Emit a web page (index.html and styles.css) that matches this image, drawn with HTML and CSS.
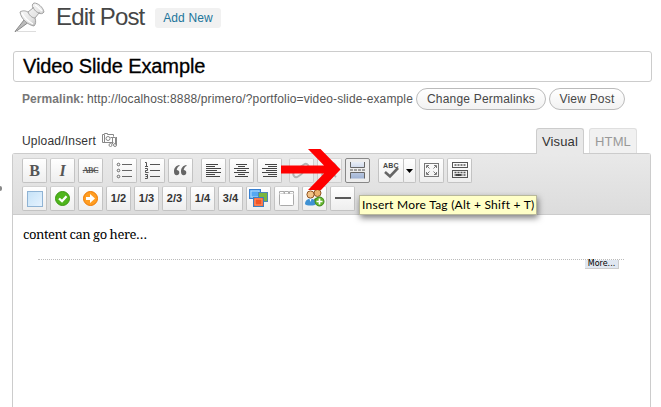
FILE: index.html
```html
<!DOCTYPE html>
<html lang="en">
<head>
<meta charset="utf-8">
<title>Edit Post</title>
<link rel="stylesheet" href="styles.css">
</head>
<body>
<header class="head">
  <svg class="pin" width="32" height="32" viewBox="0 0 32 32">
    <defs><linearGradient id="pg" x1="0" y1="0" x2="1" y2="1"><stop offset="0" stop-color="#fff"/><stop offset=".6" stop-color="#e4e4e4"/><stop offset="1" stop-color="#999"/></linearGradient></defs>
    <path d="M1 30.500L10 19l3.500 3L2 30.500z" fill="#bbb" stroke="#777" stroke-width=".8"/>
    <path d="M2 30.500h20" stroke="#ddd" stroke-width="1"/>
    <path d="M6 11c3-2 6-1 8 0l5-4c-1-2-1-4 1-5 4 0 9 4 10 9-1 2-4 2-5 1l-4 5c1 3 1 6-1 8-6-1-13-7-14-14z" fill="url(#pg)" stroke="#999" stroke-width=".9"/>
    <path d="M19 6c1 3 4 6 7 6M14 11c1 3 4 6 7 6" fill="none" stroke="#999" stroke-width=".9"/>
    <path d="M8 12c2 4 6 8 11 11M21 4c2 1 5 4 7 6" fill="none" stroke="#fff" stroke-width="1.300"/>
  </svg>
  <h1>Edit Post</h1>
  <a class="add">Add New</a>
</header>
<div class="title">Video Slide Example</div>
<div class="perma"><b>Permalink:</b><span class="url">http://localhost:8888/primero/?portfolio=video-slide-example</span><a class="pill change">Change Permalinks</a><a class="pill view">View Post</a></div>
<div class="media">
  <span class="upload">Upload/Insert</span>
  <svg class="cam" width="16" height="16" viewBox="0 0 16 16" fill="none" stroke="#888">
    <path d="M11.500 10.500H.5v-8h2v-1h3v1h6v2M2.500 3v7M8.500 5.500h5v7M10.500 5v7M14.500 5v8"/><circle cx="6" cy="6.500" r="2"/><circle cx="8.500" cy="13" r="1.500"/><circle cx="13" cy="13" r="1.500"/>
  </svg>
  <div class="tab on">Visual</div><div class="tab">HTML</div>
</div>
<main class="editor">
  <div class="tools">
    <div class="row">
      <span class="b bold">B</span><span class="b ital">I</span><span class="b strike">ABC</span>
      <span class="b g9"><svg width="23" height="23" fill="none" stroke="#666"><path d="M9 5.500h10M9 11.500h10M9 17.500h10"/><circle cx="5.500" cy="5.500" r="1.300"/><circle cx="5.500" cy="11.500" r="1.300"/><circle cx="5.500" cy="17.500" r="1.300"/></svg></span>
      <span class="b"><svg width="23" height="23" fill="none" stroke="#555"><path d="M9 5.500h10M9 11.500h10M9 17.500h10"/><path d="M4 3.500h1.500v4M4 7.500h3M4 9.500h2.500v2H4.500v2h3M4 15.500h2.500v4H4M4.500 17.500h2"/></svg></span>
      <span class="b"><svg width="23" height="23" fill="#666"><path d="M10.500 6C7 6.500 5 9 5 12.500c0 2.500 1 3.700 2.700 3.700 1.600 0 2.600-1 2.600-2.500 0-1.700-1-2.600-2.600-2.600C8 9 9 7.500 10.500 7zM17.500 6c-3.500.5-5.500 3-5.500 6.500 0 2.500 1 3.700 2.700 3.700 1.600 0 2.600-1 2.600-2.500 0-1.700-1-2.600-2.600-2.600.3-2.100 1.300-3.600 2.800-4.100z"/></svg></span>
      <span class="b g8"><svg width="23" height="23" stroke="#444"><path d="M4 5.500h12M4 7.500h9M4 9.500h15M4 11.500h11M4 13.500h15M4 15.500h9M4 17.500h14"/></svg></span>
      <span class="b"><svg width="23" height="23" stroke="#444"><path d="M6 5.500h11M8 7.500h7M4 9.500h15M7 11.500h9M4 13.500h15M8 15.500h7M5 17.500h13"/></svg></span>
      <span class="b"><svg width="23" height="23" stroke="#444"><path d="M7 5.500h12M10 7.500h9M4 9.500h15M8 11.500h11M4 13.500h15M10 15.500h9M5 17.500h14"/></svg></span>
      <span class="b g7 dim"><svg width="23" height="23" fill="none" stroke="#999" stroke-width="1.800"><rect x="3" y="11" width="10" height="6" rx="3" transform="rotate(-35 8 14)"/><rect x="9" y="6" width="10" height="6" rx="3" transform="rotate(-35 14 9)"/></svg></span>
      <span class="b dim"><svg width="23" height="23" fill="none" stroke="#999" stroke-width="1.800"><rect x="10" y="5" width="8" height="6" rx="3" transform="rotate(-35 14 8)"/><path d="M5 13l-1 3 3 2 3-1M14 14l4 4"/></svg></span>
      <span class="b active"><svg width="23" height="23"><defs><linearGradient id="mg" x2="0" y2="1"><stop stop-color="#e8edf6"/><stop offset="1" stop-color="#9fb2d4"/></linearGradient></defs><path d="M4.500 3v5.500h14V3M4.500 19.500v-6h14v6" fill="url(#mg)" stroke="#666"/><path d="M4 11h3m1 0h3m1 0h3m1 0h3" stroke="#555"/></svg></span>
      <span class="b g8 spell"><svg width="24" height="23"><text x="4" y="8.500">ABC</text><path d="M6 13l5 4.500L19 9" fill="none" stroke="#666" stroke-width="2.600"/></svg></span><span class="b drop"><svg width="11" height="23"><path d="M2 10h7l-3.500 4z" fill="#000"/></svg></span>
      <span class="b"><svg width="23" height="23" fill="none" stroke="#777"><rect x="4.500" y="4.500" width="14" height="13"/><path d="M6.500 9V6.500H9M14 6.500h2.500V9M16.500 13v2.500H14M9 15.500H6.500V13M7 7l2.500 2.500M16 7l-2.500 2.500M16 15l-2.500-2.500M7 15l2.500-2.500"/></svg></span>
      <span class="b"><svg width="23" height="23" fill="none" stroke="#555"><rect x="4.500" y="3.500" width="15" height="5"/><rect x="4.500" y="11.500" width="15" height="7"/><path d="M6.500 6h11M6.500 13.500h11M6.500 16h11" stroke-width="1.500" stroke-dasharray="2 1"/><path d="M8 16h5" stroke="#222" stroke-width="1.500"/></svg></span>
    </div>
    <div class="row">
      <span class="b"><svg width="23" height="23"><defs><linearGradient id="bg" x2="1" y2="1"><stop stop-color="#c5e2f7"/><stop offset="1" stop-color="#e6f3ff"/></linearGradient></defs><rect x="4.500" y="4.500" width="15" height="15" fill="url(#bg)" stroke="#8fb3d4"/></svg></span>
      <span class="b"><svg width="23" height="23"><circle cx="11.500" cy="11.500" r="7" fill="#4fb51c" stroke="#3b9710"/><path d="M8 11.500l3 2.700 4.500-5" fill="none" stroke="#fff" stroke-width="2.300"/></svg></span>
      <span class="b"><svg width="23" height="23"><circle cx="11.500" cy="11.500" r="7" fill="#ff9d22" stroke="#ee7900"/><path d="M7 10h4V7l5 4.500-5 4.500v-3H7z" fill="#fff"/></svg></span>
      <span class="b f">1/2</span><span class="b f">1/3</span><span class="b f">2/3</span><span class="b f">1/4</span><span class="b f">3/4</span>
      <span class="b"><svg width="23" height="23"><rect x="2.500" y="2.500" width="11" height="9" fill="#55a8f2" stroke="#377fd0"/><rect x="4" y="4" width="8" height="6" fill="none" stroke="#b5dbfa"/><rect x="11.500" y="5.500" width="9" height="9" fill="#79b63f" stroke="#4c87b8"/><rect x="6.500" y="10.500" width="10" height="9" fill="#f25524" stroke="#3c7fc0"/><rect x="8" y="12" width="7" height="6" fill="none" stroke="#ff9a70"/></svg></span>
      <span class="b"><svg width="23" height="23" fill="#fff" stroke="#aaa"><rect x="4.500" y="6.500" width="14" height="12" rx="1"/><path d="M4.500 6.500v-2H9v2M9.500 6.500v-2h4v2M14.500 6.500v-2h4v2"/></svg></span>
      <span class="b"><svg width="23" height="23"><circle cx="14.500" cy="6" r="3.500" fill="#edb36e" stroke="#8e5423"/><path d="M10 15c0-6 9-6 9 0z" fill="#569b45"/><circle cx="7.500" cy="7.500" r="3.600" fill="#f4c489" stroke="#8e5423"/><path d="M2 17c0-7 11-7 11 0-1 2-10 2-11 0z" fill="#3e91d3"/><path d="M6.500 12l1 3 1-3z" fill="#fff"/><circle cx="16.500" cy="14.500" r="4.500" fill="#62b52a" stroke="#3e861e"/><path d="M13.500 14.500h6M16.500 11.500v6" stroke="#fff" stroke-width="1.700"/></svg></span>
      <span class="b"><svg width="23" height="23"><path d="M4 11h16" stroke="#333" stroke-width="1.600"/></svg></span>
    </div>
  </div>
  <div class="content"><p>content can go here…</p><div class="more"><span>More...</span></div></div>
</main>
<svg class="arrow" width="64" height="44" viewBox="0 0 64 44"><path d="M1 18.500H44L28 2H40.500L60.500 22.500 41 43H28L44 26.500H1z" fill="#fe0000"/></svg>
<div class="tip">Insert More Tag (Alt + Shift + T)</div>
<i class="nub"></i>
</body>
</html>
```
FILE: styles.css
```css
* { box-sizing: border-box; }
body { margin: 0; width: 661px; height: 407px; overflow: hidden; position: relative; background: #fff; font: 12px/16px "Liberation Sans", Arial, sans-serif; color: #333; white-space: nowrap; }
svg { display: block; }
.head { height: 51px; padding-left: 14px; display: flex; align-items: flex-start; }
.pin { margin: 1px 10px 0 0; flex: none; }
h1 { margin: 3px 0 0; width: 99px; font-size: 24px; line-height: 28px; font-weight: 400; letter-spacing: -.85px; color: #464646; }
.add { margin-top: 8px; width: 66px; height: 20px; border-radius: 3px; background: #f1f1f1; color: #21759b; line-height: 20px; text-align: center; letter-spacing: .15px; }
.title { margin-left: 13px; width: 639px; height: 31px; border: 1px solid #ccc; border-radius: 3px; padding-left: 9px; line-height: 29px; font-size: 20px; letter-spacing: -.1px; color: #000; -webkit-text-stroke: .3px #000; }
.perma { display: flex; height: 39px; padding: 6px 0 0 22px; line-height: 22px; color: #555; }
.perma b { width: 65px; color: #777; letter-spacing: .08px; }
.url { width: 329px; letter-spacing: .135px; }
.pill { height: 22px; border: 1px solid #bbb; border-radius: 11px; background: linear-gradient(#fff, #f2f2f2); line-height: 20px; text-align: center; color: #464646; letter-spacing: .2px; }
.change { width: 130px; margin-right: 3px; }
.view { width: 76px; }
.media { height: 32px; padding: 7px 0 0 22px; display: flex; }
.upload { width: 80px; padding-top: 5px; letter-spacing: .2px; }
.cam { margin: 4px 418px 0 0; flex: none; }
.tab { height: 25px; width: 48px; border: 1px solid #dfdfdf; border-bottom: 0; border-radius: 3px 3px 0 0; background: #f1f1f1; color: #999; text-align: center; line-height: 26px; font-size: 13px; letter-spacing: .15px; margin-right: 5px; flex: none; }
.tab.on { background: #e9e9e9; border-color: #ccc; color: #333; height: 26px; position: relative; z-index: 1; }
.editor { margin-left: 12px; width: 639px; height: 260px; border: 1px solid #ccc; border-bottom: 0; border-radius: 3px 3px 0 0; }
.tools { height: 61px; background: linear-gradient(#e9e9e9, #dcdcdc); border-bottom: 1px solid #ccc; padding: 4px 0 0 9px; }
.row { display: flex; height: 28px; gap: 3px; }
.b { flex: none; width: 25px; height: 25px; border: 1px solid #c3c3c3; border-top-color: #d2d2d2; border-radius: 2px; background: linear-gradient(#fff, #eee); display: block; text-align: center; line-height: 23px; color: #555; }
.g9 { margin-left: 6px; }
.g8 { margin-left: 5px; }
.g7 { margin-left: 4px; }
.bold { font: bold 16px/23px "Liberation Serif", serif; }
.ital { font: italic bold 16px/23px "Liberation Serif", serif; }
.strike { font: bold 8px/23px "Liberation Serif", serif; letter-spacing: -.4px; text-decoration: line-through; }
.dim { opacity: .65; }
.active { border-color: #888; background: #ededed; }
.spell { width: 26px; }
.spell text { font: bold 7px "Liberation Sans", sans-serif; letter-spacing: .2px; fill: #444; }
.drop { width: 13px; margin-left: -4px; }
.f { font-weight: bold; font-size: 11px; color: #333; }
.content { padding: 11px 26px 0 25px; }
.content p { margin: 0 0 0 -15px; font: 13px/17px "Noto Serif", "Liberation Serif", serif; letter-spacing: -.46px; color: #000; }
.more { margin-top: 16px; height: 10px; border-top: 1px dotted #bbb; display: flex; justify-content: flex-end; padding-right: 5px; }
.more span { height: 9px; width: 34px; background: #e0e7f1; border: 1px solid #ccc; border-width: 0 1px 1px 0; color: #000; font: 8px/8px "DejaVu Sans", sans-serif; text-align: center; }
.arrow { position: absolute; left: 280px; top: 147px; }
.tip { position: absolute; left: 359px; top: 195px; width: 178px; height: 20px; background: #ffffc7; border: 1px solid #b8b89a; box-shadow: 1px 3px 6px rgba(0,0,0,.5); color: #000; font: 12px/18px Lato, sans-serif; letter-spacing: .25px; padding-left: 2px; }
.nub { position: absolute; left: -2px; top: 186px; width: 4px; height: 5px; border-radius: 2px; background: #888; }
```
